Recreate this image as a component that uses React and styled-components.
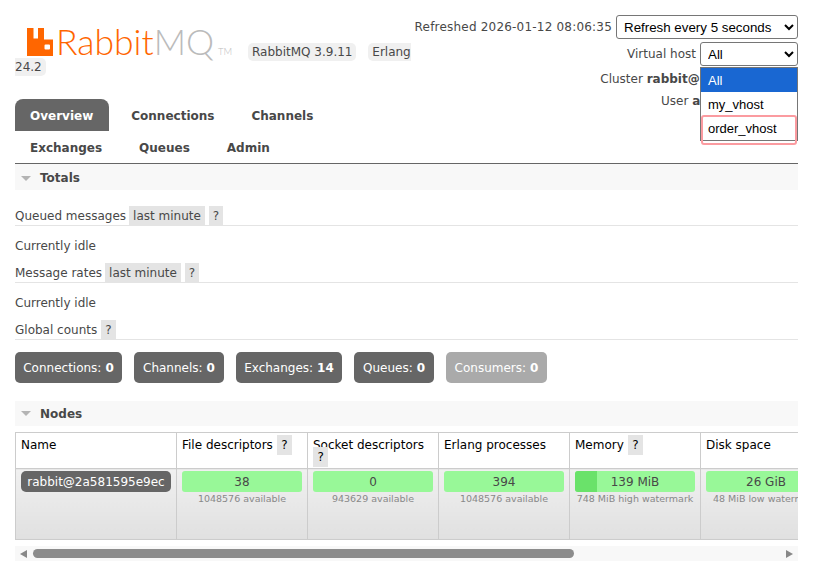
import React from 'react';
import styled, { createGlobalStyle } from 'styled-components';

const GlobalStyle = createGlobalStyle`
	html, body {
		margin: 0;
		padding: 0;
		background: #fff;
	}
	body {
		font-family: "DejaVu Sans", Verdana, sans-serif;
		font-size: 12px;
		color: #484848;
		overflow: hidden;
	}
`

const Page = styled.div`
	width: 813px;
	height: 571px;
	padding: 0 15px;
	box-sizing: border-box;
	overflow: hidden;
`

const Header = styled.header`
	display: flex;
	justify-content: space-between;
	height: 99px;
`

const Brand = styled.div`
	width: 396px;
	height: 78px;
	flex-shrink: 0;
	overflow: hidden;
	padding-top: 28px;
	box-sizing: border-box;
	line-height: 15px;
`

const Logo = styled.span`
	display: inline-flex;
	align-items: flex-start;
	margin-left: 12px;
	margin-right: 12px;
	vertical-align: bottom;
	height: 32px;
	font-family: Lato, sans-serif;
	font-weight: 300;
	font-size: 35.5px;
	line-height: 28px;
	color: #ff6600;
	svg {
		margin: 0 3px 0 0;
	}
`

const Grey = styled.span`
	color: #bbb;
`

const Tm = styled.span`
	color: #bbb;
	font-size: 9.5px;
	line-height: 10px;
	margin: 19px 0 0 4px;
`

const Pill = styled.span`
	background: #f0f0f0;
	border-radius: 5px;
	padding: 2px 4px;
	margin-right: 8px;
`

const Nowrap = styled.span`
	white-space: nowrap;
`

const Status = styled.div`
	position: relative;
	display: flex;
	flex-direction: column;
	align-items: flex-end;
	width: 383px;
	height: 112px;
	flex-shrink: 0;
	padding-top: 14px;
	box-sizing: border-box;
`

const StatusRow = styled.div`
	display: flex;
	flex-shrink: 0;
	align-items: center;
	justify-content: flex-end;
	height: ${p => p.$h}px;
	padding-right: ${p => p.$right || 0}px;
	gap: 4px;
	white-space: nowrap;
	b {
		font-weight: 700;
	}
`

const Refreshed = styled.span`
	letter-spacing: 0.2px;
`

const NativeSelect = styled.select`
	width: ${p => p.$w}px;
	height: 24px;
	font-family: "Liberation Sans", Arial, sans-serif;
	font-size: 13.33px;
	color: #000;
	background: #fff;
	border: 1px solid #767676;
	border-radius: 3px;
	padding: 0 0 0 3px;
`

const DropList = styled.ul`
	position: absolute;
	top: 67px;
	right: 0;
	width: 98px;
	margin: 0;
	padding: 0;
	list-style: none;
	background: #fff;
	border: 1px solid #767676;
	box-sizing: border-box;
	font-family: "Liberation Sans", Arial, sans-serif;
	font-size: 13px;
	color: #000;
`

const DropItem = styled.li`
	height: 24px;
	line-height: 26px;
	padding-left: 7px;
	background: ${p => (p.$active ? '#1967d2' : '#fff')};
	color: ${p => (p.$active ? '#fff' : '#000')};
`

const Highlight = styled.div`
	position: absolute;
	top: 115px;
	right: 1px;
	width: 96px;
	height: 30px;
	border: 2px solid #fb9ba0;
	border-radius: 3px;
	box-sizing: border-box;
`

const Nav = styled.nav`
	border-bottom: 1px solid #666;
	font-weight: 700;
`

const NavRow = styled.div`
	display: flex;
	gap: 7px;
	height: 32px;
`

const Tab = styled.a`
	display: flex;
	align-items: center;
	padding: 2px ${p => (p.$active ? 16 : 15)}px 0 15px;
	border-radius: 8px 8px 0 0;
	background: ${p => (p.$active ? '#666' : 'transparent')};
	color: ${p => (p.$active ? '#fff' : '#484848')};
`

const SectionBar = styled.h2`
	display: flex;
	align-items: center;
	gap: 9px;
	margin: ${p => p.$top}px 0 0;
	padding: ${p => p.$pad || 0}px 0 0 6px;
	height: ${p => p.$h}px;
	box-sizing: border-box;
	background: #f8f8f8;
	font-size: 12px;
	font-weight: 700;
	color: #484848;
`

const Caret = styled.i`
	width: 0;
	height: 0;
	border-style: solid;
	border-width: 5px 5px 0;
	border-color: #b4b4b4 transparent transparent;
`

const SubHead = styled.div`
	display: flex;
	align-items: flex-end;
	gap: 4px;
	height: 20px;
	line-height: 18px;
	margin-top: ${p => p.$top}px;
	border-bottom: 1px solid #e4e4e4;
`

const Tag = styled.span`
	background: #e4e4e4;
	margin-left: -1px;
	padding: 1px 4px 0;
`

const HeadHelp = styled.span`
	background: #e4e4e4;
	padding: 1px 4px 0;
`

const Idle = styled.p`
	margin: 13px 0 -1px;
	line-height: 15px;
`

const Counts = styled.div`
	display: flex;
	gap: 12px;
	margin-top: 12px;
`

const Count = styled.div`
	display: flex;
	align-items: center;
	justify-content: center;
	width: ${p => p.$w}px;
	height: 31px;
	border-radius: 5px;
	background: ${p => (p.$off ? '#aaa' : '#666')};
	color: #fff;
	gap: 4px;
	b {
		font-weight: 700;
	}
`

const TableWrap = styled.div`
	margin-top: 6px;
	overflow: hidden;
`

const Table = styled.table`
	width: 816px;
	table-layout: fixed;
	border-collapse: collapse;
	border: 1px solid #ccc;
`

const Th = styled.th`
	width: ${p => p.$w}px;
	height: 36px;
	padding: 6px 5px 0;
	border: 1px solid #ccc;
	background: #fff;
	color: #000;
	font-weight: 400;
	text-align: left;
	vertical-align: top;
	line-height: 12px;
	box-sizing: border-box;
`

const ThHelp = styled.span`
	background: #e4e4e4;
	padding: 3px 4.5px;
`

const Td = styled.td`
	height: 71px;
	padding: 2px 5px 0;
	border: 1px solid #ccc;
	background: linear-gradient(#f0f0f0, #e0e0e0);
	vertical-align: top;
	text-align: center;
	box-sizing: border-box;
`

const NodeName = styled.div`
	background: #666;
	color: #fff;
	border-radius: 5px;
	height: 21px;
	line-height: 22px;
	white-space: nowrap;
	text-align: center;
`

const Meter = styled.div`
	position: relative;
	height: 21px;
	line-height: 22px;
	border-radius: 3px;
	overflow: hidden;
	background: #98f898;
	color: #484848;
`

const MeterFill = styled.div`
	position: absolute;
	left: 0;
	top: 0;
	bottom: 0;
	background: #6ae26a;
`

const MeterValue = styled.span`
	position: relative;
`

const Sub = styled.div`
	font-size: 9.5px;
	line-height: 13px;
	color: #888;
	white-space: nowrap;
`

const ScrollBar = styled.div`
	display: flex;
	align-items: center;
	gap: 6px;
	height: 15px;
	margin-top: 6px;
	background: #f8f8f8;
`

const Arrow = styled.i`
	width: 0;
	height: 0;
	border-style: solid;
	border-width: 4.5px 0;
	margin: 0 ${p => (p.$right ? 5 : 0)}px 0 ${p => (p.$right ? 0 : 5)}px;
	${p => (p.$right ? 'border-left: 7px solid #888;' : 'border-right: 7px solid #888;')}
	border-top-color: transparent;
	border-bottom-color: transparent;
`

const Track = styled.div`
	flex: 1;
	height: 9px;
`

const Thumb = styled.div`
	width: 541px;
	height: 9px;
	border-radius: 5px;
	background: #8c8c8c;
`

const columns = [
	{ w: 161, label: 'Name' },
	{ w: 131, label: 'File descriptors', help: true },
	{ w: 131, label: 'Socket descriptors', help: true },
	{ w: 131, label: 'Erlang processes' },
	{ w: 131, label: 'Memory', help: true },
	{ w: 131, label: 'Disk space' },
];

const meters = [
	{ value: '38', sub: '1048576 available' },
	{ value: '0', sub: '943629 available' },
	{ value: '394', sub: '1048576 available' },
	{ value: '139 MiB', sub: '748 MiB high watermark', fill: 22 },
	{ value: '26 GiB', sub: '48 MiB low watermark' },
];

const RabbitIcon = () => (
	<svg width="26" height="28" viewBox="0 0 26 28">
		<path
			fill="#ff6600"
			fillRule="evenodd"
			d="M0 0h6.5v10.5H11V0h6v11.5h9V28H0z M18.5 16.5a1 1 0 0 0-1 1v3a1 1 0 0 0 1 1h3.5a1 1 0 0 0 1-1v-3a1 1 0 0 0-1-1z"
		/>
	</svg>
);

const App = () => {
	return (
		<Page>
			<GlobalStyle />
			<Header>
				<Brand>
					<Logo>
						<RabbitIcon />
						<span>Rabbit<Grey>MQ</Grey></span>
						<Tm>TM</Tm>
					</Logo>{' '}
					<Nowrap><Pill>RabbitMQ 3.9.11</Pill></Nowrap>{' '}
					<Pill>Erlang 24.2</Pill>
				</Brand>
				<Status>
					<StatusRow $h={26}>
						<Refreshed>Refreshed 2026-01-12 08:06:35</Refreshed>
						<NativeSelect $w={182} defaultValue="5">
							<option value="5">Refresh every 5 seconds</option>
						</NativeSelect>
					</StatusRow>
					<StatusRow $h={28}>
						<span>Virtual host</span>
						<NativeSelect $w={98} defaultValue="all">
							<option value="all">All</option>
						</NativeSelect>
					</StatusRow>
					<StatusRow $h={22}>
						<span>Cluster <b>rabbit@2a581595e9ec</b></span>
					</StatusRow>
					<StatusRow $h={22} $right={64}>
						<span>User <b>admin</b></span>
					</StatusRow>
					<DropList>
						<DropItem $active>All</DropItem>
						<DropItem>my_vhost</DropItem>
						<DropItem>order_vhost</DropItem>
					</DropList>
					<Highlight />
				</Status>
			</Header>
			<Nav>
				<NavRow>
					<Tab $active>Overview</Tab>
					<Tab>Connections</Tab>
					<Tab>Channels</Tab>
				</NavRow>
				<NavRow>
					<Tab>Exchanges</Tab>
					<Tab>Queues</Tab>
					<Tab>Admin</Tab>
				</NavRow>
			</Nav>
			<SectionBar $top={0} $h={26} $pad={2}><Caret />Totals</SectionBar>
			<SubHead $top={15}>
				Queued messages <Tag>last minute</Tag> <HeadHelp>?</HeadHelp>
			</SubHead>
			<Idle>Currently idle</Idle>
			<SubHead $top={9}>
				Message rates <Tag>last minute</Tag> <HeadHelp>?</HeadHelp>
			</SubHead>
			<Idle>Currently idle</Idle>
			<SubHead $top={9}>
				Global counts <HeadHelp>?</HeadHelp>
			</SubHead>
			<Counts>
				<Count $w={107}>Connections: <b>0</b></Count>
				<Count $w={90}>Channels: <b>0</b></Count>
				<Count $w={106}>Exchanges: <b>14</b></Count>
				<Count $w={80}>Queues: <b>0</b></Count>
				<Count $w={101} $off>Consumers: <b>0</b></Count>
			</Counts>
			<SectionBar $top={18} $h={25}><Caret />Nodes</SectionBar>
			<TableWrap>
				<Table>
					<thead>
						<tr>
							{columns.map(col => (
								<Th key={col.label} $w={col.w}>
									{col.label} {col.help && <ThHelp>?</ThHelp>}
								</Th>
							))}
						</tr>
					</thead>
					<tbody>
						<tr>
							<Td><NodeName>rabbit@2a581595e9ec</NodeName></Td>
							{meters.map(m => (
								<Td key={m.sub}>
									<Meter>
										{m.fill && <MeterFill style={{ width: m.fill }} />}
										<MeterValue>{m.value}</MeterValue>
									</Meter>
									<Sub>{m.sub}</Sub>
								</Td>
							))}
						</tr>
					</tbody>
				</Table>
			</TableWrap>
			<ScrollBar>
				<Arrow />
				<Track><Thumb /></Track>
				<Arrow $right />
			</ScrollBar>
		</Page>
	);
}

export default App;
